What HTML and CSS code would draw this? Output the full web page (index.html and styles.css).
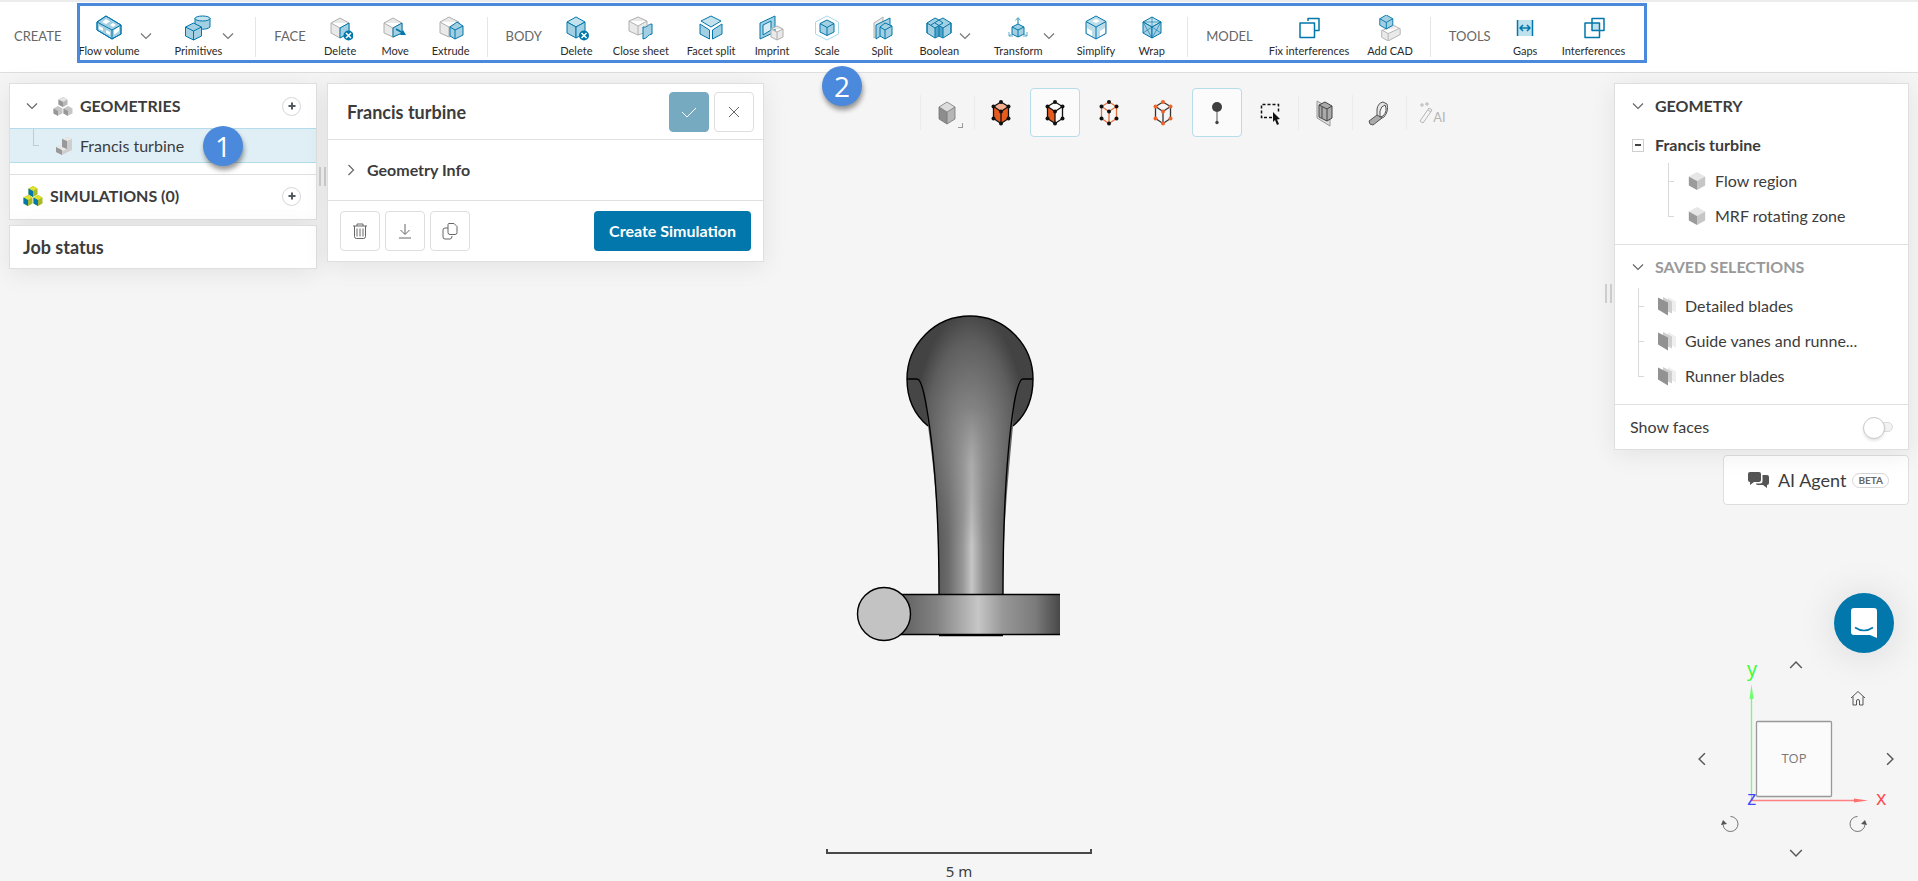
FILE: index.html
```html
<!DOCTYPE html>
<html lang="en">
<head>
<meta charset="utf-8">
<title>Francis turbine</title>
<link rel="stylesheet" href="styles.css">
</head>
<body>
<svg class="defs" aria-hidden="true">
  <symbol id="chev-down" viewBox="0 0 12 12"><path d="M1 3.500 6 8.500l5-5" fill="none" stroke="currentColor" stroke-width="1.200"/></symbol>
  <symbol id="plus" viewBox="0 0 12 12"><path d="M6 2.500v7M2.500 6h7" stroke="#50595f" stroke-width="2"/></symbol>
  <symbol id="solid" viewBox="0 0 20 22"><path d="m10 1 9 5-9 5-9-5z" fill="#e6e6e6"/><path d="m1 6 9 5v10l-9-5z" fill="#9b9b9b"/><path d="m19 6-9 5v10l9-5z" fill="#c6c6c6"/></symbol>
  <symbol id="faces" viewBox="0 0 20 20"><path d="m11 1 8 4.500v11l-8-4z" fill="#eee"/><path d="m6 1 9 4.500v12L6 13z" fill="#cfcfcf"/><path d="m1 1.500 10 5v13l-10-6z" fill="#929292"/></symbol>
  <symbol id="cad" viewBox="0 0 26 26"><path d="m13 2 9 5-9 5-9-5z" class="t1"/><path d="m4 7 9 5v11l-9-5z" class="t2"/><path d="m22 7-9 5v11l9-5z" class="t2"/></symbol>
  <symbol id="nodes" viewBox="0 0 22 28"><circle cx="11" cy="3" r="2"/><circle cx="3.500" cy="7.500" r="2"/><circle cx="18.500" cy="7.500" r="2"/><circle cx="11" cy="12.500" r="2"/><circle cx="3.500" cy="19.500" r="2"/><circle cx="18.500" cy="19.500" r="2"/><circle cx="11" cy="24.500" r="2"/></symbol>
  <symbol id="wire" viewBox="0 0 22 28"><path d="m11 3 7.500 4.500v12L11 24.500l-7.500-5v-12zM3.500 7.500l7.500 5 7.500-5M11 12.500v12" fill="none" stroke="currentColor" stroke-width="1.300"/></symbol>
</svg>

<header class="ribbon">
  <section class="group">
    <h2 class="group-name">CREATE</h2>
    <button class="tool has-menu"><svg viewBox="0 0 26 26"><path d="m1 7 9-6 15 9v9l-9 5-15-9z" class="t2"/><path d="m6 7 4-3 4 2.500-4 2.500zM14 10l3-2 3 2-3 2zM3 11l4 2v3l-4-2zM10 15l4 2v3l-4-2zM18 15l5-3v4l-5 4z" fill="#fff"/><path d="m1 7 9-6 15 9v9l-9 5-15-9zl15 8 9-5M16 15v9" class="ln"/></svg>Flow volume<span class="caret"><svg><use href="#chev-down"/></svg></span></button>
    <button class="tool has-menu"><svg viewBox="0 0 26 26"><path d="M10 3v9c3 3 12 3 15 0V3" class="t2"/><ellipse cx="17.500" cy="3.500" rx="7.500" ry="2.500" class="t1"/><path d="m8.500 8 8 4v9l-8 4-8-4v-9z" class="t2"/><path d="m.5 12 8 4 8-4M8.500 16v9" class="ln"/></svg>Primitives<span class="caret"><svg><use href="#chev-down"/></svg></span></button>
  </section>
  <section class="group">
    <h2 class="group-name">FACE</h2>
    <button class="tool"><svg viewBox="0 0 26 26"><path d="m13 3 9 5v10l-9 5-9-5V8zM4 8l9 5 9-5M13 13v10" class="gr"/><path d="m22 8-9 5v10l9-5z" class="t2"/><circle cx="21.500" cy="20.500" r="5" fill="#0277ab"/><path d="m19 18 5 5m0-5-5 5" stroke="#fff" stroke-width="1.500"/></svg>Delete</button>
    <button class="tool"><svg viewBox="0 0 26 26"><path d="m11 3 9 5v10l-9 4-9-4V8zM2 8l9 5 9-5M11 13v10" class="gr"/><path d="m20 8-9 5v9l9-4z" class="t2"/><path d="m14 14 7 4" stroke="#0277ab" stroke-width="1.500"/><path d="m18 20 6 0-3-5z" fill="#0277ab"/></svg>Move</button>
    <button class="tool"><svg viewBox="0 0 26 26"><path d="m11 2 10 5v10l-10 5-9-4V7zM2 7l9 5 10-5M11 12v10" class="gr"/><path d="m19 7 6 4v9l-8 4-5-3v-9z" class="t2"/><path d="m12 12 5 3 8-4M17 15v9" class="ln"/></svg>Extrude</button>
  </section>
  <section class="group">
    <h2 class="group-name">BODY</h2>
    <button class="tool"><svg viewBox="0 0 26 26"><use href="#cad"/><circle cx="21" cy="20.500" r="5" fill="#0277ab"/><path d="m18.500 18 5 5m0-5-5 5" stroke="#fff" stroke-width="1.500"/></svg>Delete</button>
    <button class="tool"><svg viewBox="0 0 26 26"><path d="m10 2 9 4v11l-9 3-9-4V6zM1 6l9 5 9-5M10 11v9" class="gr"/><path d="M15 12c4 1 5-3 9-3v10c-4 0-5 5-9 5z" class="t2"/></svg>Close sheet</button>
    <button class="tool"><svg viewBox="0 0 26 26"><path d="m13 1 10 5-10 6L3 6z" class="t1"/><path d="m2 9 9.500 6v9L2 19zM24 9l-9.500 6v9l9.500-5z" class="t2"/></svg>Facet split</button>
    <button class="tool"><svg viewBox="0 0 26 26"><path d="m1 8 15-7v16L1 24z" class="t2"/><path d="m4 10 8-4v9l-8 5z" fill="#d9ebf3" stroke="#0277ab"/><path d="m18 11 6 3v8l-6 3-6-3v-8zM12 14l6 3 6-3M18 17v8" class="gr"/></svg>Imprint</button>
    <button class="tool"><svg viewBox="0 0 26 26"><path d="m13 1 11.500 6v12L13 25 1.500 19V7z" fill="none" stroke="#a9d8ea"/><path d="m13 5 7 3.500V17l-7 3.500L6 17V8.500z" class="t2"/><path d="m6 8.500 7 4 7-4M13 12.500v8" class="ln"/></svg>Scale</button>
    <button class="tool"><svg viewBox="0 0 26 26"><path d="m5 8 9-6v14l-9 7z" class="gr"/><path d="m7 10 14-7v12L7 24z" class="t2"/><path d="m16 8 7 3v9l-7 4-5-3v-9z" class="t2"/><path d="m11 12 5 3 7-4M16 15v9" class="ln"/></svg>Split</button>
    <button class="tool has-menu"><svg viewBox="0 0 26 26"><path d="m1 8 8-5 4 2 4-2 8 5v10l-8 5-4-2-4 2-8-5z" class="t2"/><path d="M1 8l8 5 8-5-4-3-8 5M25 8l-8 5-8-5M9 13v10M17 13v10M13 11v10M1 8v10M25 8v10" class="ln"/><path d="M9 13l4-2 4 2v9l-4-1-4 1z" fill="#0277ab" opacity=".5"/></svg>Boolean<span class="caret"><svg><use href="#chev-down"/></svg></span></button>
    <button class="tool has-menu"><svg viewBox="0 0 26 26"><path d="m13 9 6 3v7l-6 3-6-3v-7z" class="t2"/><path d="m7 12 6 3 6-3M13 15v7M13 9V3" class="ln"/><path d="m10.500 5.500 2.500-3 2.500 3M7 19l-3 2M4 17v4h4M19 19l3 2M22 17v4h-4" fill="none" stroke="#5aaccd"/></svg>Transform<span class="caret"><svg><use href="#chev-down"/></svg></span></button>
    <button class="tool"><svg viewBox="0 0 26 26"><path d="m13 1 10 5.500v12L13 24 3 18.500v-12z" fill="#bcdcea"/><path d="m4 13 5 3v5l-5-3zM22 13l-5 3v5l5-3zM9 6l4-2 4 2-4 2z" fill="#fff"/><path d="m13 1 10 5.500v12L13 24 3 18.500v-12zM3 6.500l10 5.500 10-5.500M13 12v12" class="ln"/></svg>Simplify</button>
    <button class="tool"><svg viewBox="0 0 26 26"><use href="#cad"/><path d="m4 7 9 16M13 12l-9 6M22 7l-9 16M13 12l9 6M4 7h18M13 2v10" class="ln thin"/></svg>Wrap</button>
  </section>
  <section class="group">
    <h2 class="group-name">MODEL</h2>
    <button class="tool"><svg viewBox="0 0 26 26"><path d="M12 6V3.500h11v12h-4M4 8h14.500v14.500H4z" class="ln wide"/></svg>Fix interferences</button>
    <button class="tool"><svg viewBox="0 0 26 28"><path d="m17 11 7 4v6l-13 7-7-4v-7zM4 16l7 4 13-6M11 20v8" class="gr"/><path d="m9 0 7 4v7l-7 4-7-4V4z" class="t2"/><path d="m2 4 7 4 7-4M9 8v7" class="ln"/></svg>Add CAD</button>
  </section>
  <section class="group">
    <h2 class="group-name">TOOLS</h2>
    <button class="tool"><svg viewBox="0 0 26 26"><path d="M6 5h14v16H6z" fill="#bfe0ed"/><path d="M5.500 5v16M20.500 5v16M8 13h10M11 10l-3 3 3 3M15 10l3 3-3 3" class="ln wide"/></svg>Gaps</button>
    <button class="tool"><svg viewBox="0 0 26 26"><path d="M11 8h7.500v7H11z" fill="#bfe0ed"/><path d="M11 3.500h12v12H11zM4 8h14.500v14.500H4z" class="ln wide"/></svg>Interferences</button>
  </section>
  <div class="callout-frame"></div>
</header>

<main class="workspace">
  <div class="scene">
    <svg class="model" viewBox="0 0 206 328" role="img" aria-label="Francis turbine model">
      <defs>
        <linearGradient id="pipe"><stop offset="0" stop-color="#484848"/><stop offset=".25" stop-color="#6a6a6a"/><stop offset=".42" stop-color="#989898"/><stop offset=".52" stop-color="#c6c6c6"/><stop offset=".65" stop-color="#909090"/><stop offset="1" stop-color="#484848"/></linearGradient>
        <linearGradient id="ring"><stop offset="0" stop-color="#5b5b5b"/><stop offset=".25" stop-color="#838383"/><stop offset=".5" stop-color="#c6c6c6"/><stop offset=".65" stop-color="#989898"/><stop offset=".85" stop-color="#7b7b7b"/><stop offset="1" stop-color="#484848"/></linearGradient>
        <radialGradient id="dome" gradientUnits="userSpaceOnUse" cx="0" cy="0" r="1" gradientTransform="translate(114 150) scale(60 155)"><stop offset="0" stop-color="#9c9c9c"/><stop offset=".4" stop-color="#808080"/><stop offset=".8" stop-color="#5e5e5e"/><stop offset="1" stop-color="#434343"/></radialGradient>
        <linearGradient id="fade" gradientUnits="userSpaceOnUse" x1="0" y1="90" x2="0" y2="230"><stop offset="0" stop-color="#000"/><stop offset=".5" stop-color="#777"/><stop offset="1" stop-color="#fff"/></linearGradient>
        <mask id="blend"><path d="M0 0h206v328H0z" fill="url(#fade)"/></mask>
      </defs>
      <path d="M51 64a63 63 0 0 1 126 0c0 21-8 36-20 47-5 54-10 100-10 168H83c0-68-3-110-11-168C60 100 51 85 51 64z" fill="url(#dome)"/>
      <path d="M51 64h10c3 0 6 8 9 25l2 22C60 101 51 85 51 64zM177 64h-10c-3 0-6 8-9 25l-1 22c12-10 20-26 20-47z" fill="#464646"/>
      <path d="M70 89c8 45 13 110 13 190h64c0-80 4-145 11-190z" fill="url(#pipe)" mask="url(#blend)"/>
      <path d="M72 111C60 101 51 85 51 64a63 63 0 0 1 126 0c0 21-8 37-20 47M51 64h10c3 0 6 8 9 25 8 45 13 110 13 190M177 64h-10c-3 0-6 8-9 25-7 45-11 110-11 190" fill="none" stroke="#000" stroke-width="1.400"/>
      <path d="M40 279h164v41H40z" fill="url(#ring)"/>
      <path d="M40 279.500h164M40 319.500h164M83 320.500h64" stroke="#000" stroke-width="1.300"/>
      <circle cx="28" cy="299" r="26.500" fill="#c3c3c3" stroke="#000" stroke-width="1.400"/>
    </svg>
  </div>

  <aside class="left">
    <nav class="card">
      <div class="branch-head indent"><svg class="chev"><use href="#chev-down"/></svg>
        <svg class="ico20" viewBox="0 0 20 20"><path d="m10 1 4.500 2.500v5L10 11 5.500 8.500v-5z" fill="#b8b8b8"/><path d="m10 1 4.500 2.500L10 6 5.500 3.500z" fill="#e3e3e3"/><path d="m5.500 3.500 4.500 2.500v5l-4.500-2.500z" fill="#979797"/><path d="m5 10 4.500 2.500v5L5 19.500.5 17.500v-5z" fill="#c6c6c6"/><path d="M.5 12.500 5 15v5l-4.500-2.500z" fill="#979797"/><path d="m15 10 4.500 2.500v5L15 19.500l-4.500-2v-5z" fill="#c6c6c6"/><path d="M10.500 12.500 15 15v5l-4.500-2.500z" fill="#979797"/></svg>
        <h3>GEOMETRIES</h3><button class="add" aria-label="Add geometry"><svg><use href="#plus"/></svg></button></div>
      <a class="leaf selected" href="#"><span class="elbow"></span><svg class="ico20" viewBox="0 0 20 20"><path d="m8 3 6-2 4 2v11l-10 5-6-3v-5l6-1z" fill="#cecece"/><path d="m8 3 6-2 4 2-5 2zM2 11l4-2 7 4-5 2z" fill="#e8e8e8"/><path d="m8 3 5 2v8l-5-2zM2 11l6 3v5l-6-3z" fill="#999"/></svg>Francis turbine</a>
      <div class="branch-head sims"><svg class="ico20" viewBox="0 0 20 20"><path d="m10 0 4.500 2.500v6L10 11 5.500 8.500v-6z" fill="#a5b92a"/><path d="m10 0 4.500 2.500L10 5 5.500 2.500z" fill="#dce22f"/><path d="m5.500 2.500 4.500 2.500v6L5.500 8.500z" fill="#0277ab"/><path d="m5 9 4.500 2.500v6L5 20 .5 17.500v-6z" fill="#a5b92a"/><path d="m5 9 4.500 2.500L5 14 .5 11.500z" fill="#dce22f"/><path d="m.5 11.500 4.500 2.500v6L.5 17.500z" fill="#0277ab"/><path d="m15 9 4.500 2.500v6L15 20l-4.500-2.500v-6z" fill="#a5b92a"/><path d="m15 9 4.500 2.500L15 14l-4.500-2.500z" fill="#dce22f"/><path d="m10.500 11.500 4.500 2.500v6l-4.500-2.500z" fill="#0277ab"/></svg>
        <h3>SIMULATIONS (0)</h3><button class="add" aria-label="Add simulation"><svg><use href="#plus"/></svg></button></div>
      <span class="badge badge-one">1</span>
    </nav>
    <section class="card job"><h3>Job status</h3></section>
  </aside>
  <span class="grip near"></span>
  <section class="card details">
    <header class="details-head"><h2>Francis turbine</h2>
      <button class="square done" aria-label="Apply"><svg viewBox="0 0 16 16"><path d="m1 8 5 5 9-9" stroke="#fff"/></svg></button>
      <button class="square" aria-label="Close"><svg viewBox="0 0 16 16"><path d="m3 3 10 10M13 3 3 13"/></svg></button></header>
    <button class="info"><svg class="chev side"><use href="#chev-down"/></svg>Geometry Info</button>
    <footer class="details-foot">
      <button class="square" aria-label="Delete"><svg viewBox="0 0 16 16"><path d="M1 3h14M5 3V1h6v2M2.500 3v10.500a2 2 0 0 0 2 2h7a2 2 0 0 0 2-2V3M5 5.500v8M8 5.500v8M11 5.500v8"/></svg></button>
      <button class="square" aria-label="Download"><svg viewBox="0 0 16 16"><path d="M8 1v10M3.500 7 8 11.500 12.500 7M2 15h12"/></svg></button>
      <button class="square" aria-label="Duplicate"><svg viewBox="0 0 16 16"><path d="M7 .5h5l3 3v6a2 2 0 0 1-2 2H8a2 2 0 0 1-2-2v-8a1 1 0 0 1 1-1zM6 5H3a2 2 0 0 0-2 2v7a2 2 0 0 0 2 2h5q2 0 2-3"/></svg></button>
      <button class="primary">Create Simulation</button>
    </footer>
  </section>

  <div class="viewbar">
    <button class="view sep" aria-label="Render mode"><svg viewBox="0 0 22 28"><path d="m11 3 8 5-8 5-8-5z" fill="#dcdcdc"/><path d="M3 8l8 5v12l-8-5z" fill="#8d8d8d"/><path d="M19 8l-8 5v12l8-5z" fill="#b5b5b5"/><path d="m11 3 8 5v12l-8 5-8-5V8zM3 8l8 5 8-5M11 13v12" fill="none" stroke="#777" stroke-width=".8"/></svg><span class="corner"></span></button>
    <button class="view sep" aria-label="Select volumes"><svg viewBox="0 0 22 28"><path d="m11 3 7.500 4.500v12L11 24.500l-7.500-5v-12z" fill="#e65a1e"/><path d="m11 3 7.500 4.500-7.500 5-7.500-5z" fill="#f6ae8e"/><use href="#wire" color="#111"/><use href="#nodes" fill="#111"/></svg></button>
    <button class="view on" aria-label="Select faces"><svg viewBox="0 0 22 28"><path d="m3.500 7.500 7.500 5v12l-7.500-5z" fill="#e65a1e"/><use href="#wire" color="#111"/><use href="#nodes" fill="#111"/></svg></button>
    <button class="view" aria-label="Select edges"><svg viewBox="0 0 22 28"><use href="#wire" color="#e8713d"/><use href="#nodes" fill="#111"/></svg></button>
    <button class="view" aria-label="Select vertices"><svg viewBox="0 0 22 28"><use href="#wire" color="#333"/><use href="#nodes" fill="#f0642b"/></svg></button>
    <button class="view on" aria-label="Probe point"><svg viewBox="0 0 22 28"><circle cx="11" cy="8" r="5" fill="#3f3f3f"/><path d="M11 13v10" stroke="#555"/><circle cx="11" cy="23.500" r="1.700" fill="#444"/></svg></button>
    <button class="view" aria-label="Box select"><svg viewBox="0 0 22 28"><path d="M2.500 18.500h-1v-13h17v9" fill="none" stroke="#111" stroke-width="1.500" stroke-dasharray="3 2"/><path d="M4 18.500h8" stroke="#111" stroke-width="1.500" stroke-dasharray="3 2"/><path d="m13 13 7 7-3 .5 2 4.500-2 1-2-5-2 2z" fill="#111"/></svg></button>
    <button class="view sep" aria-label="Section plane"><svg viewBox="0 0 22 28"><path d="m3 2 13 7v18L3 19z" fill="#ddd" stroke="#999"/><path d="m5 6 6-3 7 4v12l-5 3-8-4z" fill="#aaa" stroke="#444"/><path d="m5 6 8 4v12M13 10l5-3M8 8v11" fill="none" stroke="#444"/></svg></button>
    <button class="view sep" aria-label="Measure"><svg viewBox="0 0 22 28"><path d="M9 17V10q1-6 6-7l4 2q2 7-3 13l-4 2z" fill="#e4e4e4" stroke="#555"/><path d="M12 18v-6q1-5 5-6 3 6-2 11z" fill="#f6f6f6" stroke="#555"/><path d="m9 16-8 6 1 3 3 1 9-7z" fill="#aaa" stroke="#555"/></svg></button>
    <button class="view sep ai" aria-label="AI assistant"><svg viewBox="0 0 14 22"><path d="m1 19 9-13 3 2-9 13zM9 8l3 2M3 1v4M1 3h4M8 0v4M6 2h4" fill="none" stroke="#b5b5b5"/></svg><span>AI</span></button>
    <span class="badge badge-two">2</span>
  </div>

  <span class="grip far"></span>
  <aside class="right">
    <section class="card">
      <div class="tree">
        <div class="row head"><svg class="chev"><use href="#chev-down"/></svg><h3>GEOMETRY</h3></div>
        <div class="row root"><button class="fold" aria-label="Collapse"></button><h3>Francis turbine</h3></div>
        <ul class="twigs deep">
          <li><svg class="cube"><use href="#solid"/></svg>Flow region</li>
          <li><svg class="cube"><use href="#solid"/></svg>MRF rotating zone</li>
        </ul>
      </div>
      <div class="tree saved">
        <div class="row head"><svg class="chev"><use href="#chev-down"/></svg><h3 class="muted">SAVED SELECTIONS</h3></div>
        <ul class="twigs">
          <li><svg class="cube"><use href="#faces"/></svg>Detailed blades</li>
          <li><svg class="cube"><use href="#faces"/></svg>Guide vanes and runne...</li>
          <li><svg class="cube"><use href="#faces"/></svg>Runner blades</li>
        </ul>
      </div>
      <label class="switch-row">Show faces<input type="checkbox" class="switch"></label>
    </section>
    <button class="agent"><svg viewBox="0 0 21 16"><path d="M2 0h9q2 0 2 2v6q0 2-2 2H6l-4 3v-3q-2 0-2-2V2q0-2 2-2z"/><path d="M14.500 3H19q2 0 2 2v6q0 2-2 2v3l-4-3h-5q-2 0-2-1.500h4q2.500 0 2.500-2.500z"/></svg>AI Agent<span class="beta">BETA</span></button>
  </aside>

  <button class="chat" aria-label="Open chat"><svg viewBox="0 0 26 30"><path d="M3 0h20q3 0 3 3v27l-7-3H3q-3 0-3-3V3q0-3 3-3z" fill="#fff"/><path d="M4 19.500q9 6 18 0" fill="none" stroke="#0277ab" stroke-width="1.600"/></svg></button>

  <div class="gizmo">
    <svg class="axes" viewBox="0 0 150 150"><path d="M17.500 137V35" stroke="#6dff6d" stroke-width="1.300"/><path d="m17.500 20 2 15h-4z" fill="#6dff6d"/><path d="M18 136.500h102" stroke="#ff8080" stroke-width="1.500"/><path d="m134 136.500-14 2v-4z" fill="#ff7272"/><rect x="22.500" y="57.500" width="75" height="75" rx="1" fill="#fbfbfb" stroke="#999" stroke-width="1.300"/></svg>
    <span class="axis y">y</span><span class="axis x">x</span><span class="axis z">z</span>
    <span class="face">TOP</span>
    <button class="spin up" aria-label="Rotate up"><svg><use href="#chev-down"/></svg></button>
    <button class="spin down" aria-label="Rotate down"><svg><use href="#chev-down"/></svg></button>
    <button class="spin west" aria-label="Rotate left"><svg><use href="#chev-down"/></svg></button>
    <button class="spin east" aria-label="Rotate right"><svg><use href="#chev-down"/></svg></button>
    <button class="spin home" aria-label="Home"><svg viewBox="0 0 16 16"><path d="m1 8 7-6.500L15 8M3 6.500V15h3.500v-4a1.500 1.500 0 0 1 3 0v4H13V6.500" fill="none" stroke="#555"/></svg></button>
    <button class="spin ccw" aria-label="Roll left"><svg viewBox="0 0 20 18"><path d="M10.500 1.500a7.500 7.500 0 1 1-7.500 8" fill="none" stroke="#777"/><path d="m1 10 2-5 4 4z" fill="#555"/></svg></button>
    <button class="spin cw" aria-label="Roll right"><svg viewBox="0 0 20 18"><path d="M9.500 1.500a7.500 7.500 0 1 0 7.500 8" fill="none" stroke="#777"/><path d="m19 10-2-5-4 4z" fill="#555"/></svg></button>
  </div>

  <div class="ruler"><span class="ruler-bar"></span>5 m</div>
</main>
</body>
</html>
```

FILE: styles.css
```css
* { box-sizing: border-box; }
body {
  margin: 0;
  min-height: 100vh;
  display: flex;
  flex-direction: column;
  overflow: hidden;
  background: #f5f5f5;
  color: #3c3c3c;
  font: 16px/20px Lato, "Open Sans", sans-serif;
}
h2, h3, ul { margin: 0; padding: 0; }
h3 { font-size: 16px; line-height: 20px; font-weight: 700; }
button { font: inherit; color: inherit; background: none; border: 0; padding: 0; cursor: pointer; }
svg { display: block; flex: none; }
.defs { position: absolute; width: 0; height: 0; }

.t1 { fill: #c4e2ee; stroke: #0277ab; stroke-linejoin: round; }
.t2 { fill: #a3cfe2; stroke: #0277ab; stroke-linejoin: round; }
.ln { fill: none; stroke: #0277ab; stroke-linejoin: round; }
.ln.wide { stroke-width: 1.5; }
.ln.thin { stroke-width: .6; }
.gr { fill: #e9e9e9; stroke: #b0b0b0; stroke-linejoin: round; }

/* ribbon */
.ribbon {
  position: relative;
  display: flex;
  height: 73px;
  padding: 0 14px;
  background: #fff;
  border-top: 2px solid #ececec;
  border-bottom: 1px solid #dedede;
}
.group { display: flex; align-items: center; }
.group + .group::before {
  content: "";
  width: 1px;
  height: 40px;
  margin: 0 18px 0 8px;
  background: #e6e6e6;
}
.group-name { margin-right: 7px; padding-bottom: 3px; font-size: 13px; font-weight: 400; color: #666; }
.tool {
  position: relative;
  display: flex;
  flex-direction: column;
  align-items: center;
  min-width: 55px;
  padding: 0 9px;
  gap: 2px;
  font-size: 11px;
  line-height: 16px;
  color: #2a2a2a;
  white-space: nowrap;
}
.tool > svg { width: 26px; height: 26px; }
.tool.has-menu { min-width: 0; padding: 0 0 0 10px; margin-right: 25px; }
.caret { position: absolute; left: 100%; top: 15px; color: #777; }
.caret svg { width: 12px; height: 12px; }
.callout-frame {
  position: absolute;
  left: 77px;
  top: 1px;
  width: 1570px;
  height: 60px;
  border: 3px solid #4a89dc;
  pointer-events: none;
}

/* workspace */
.workspace {
  position: relative;
  flex: 1;
  display: flex;
  align-items: flex-start;
  padding: 10px 9px 0 9px;
}
.workspace > * { flex: none; }
.scene {
  position: absolute;
  inset: 0;
  display: flex;
  align-items: center;
  justify-content: center;
  padding-top: 4px;
}
.model { width: 206px; height: 328px; }
.card {
  position: relative;
  background: #fff;
  border: 1px solid #dfdfdf;
  box-shadow: 0 4px 24px rgba(0, 0, 0, .08);
}
.left { position: relative; width: 308px; display: grid; gap: 5px; }
.branch-head { display: flex; align-items: center; height: 44px; padding: 0 15px 0 13px; }
.branch-head.indent { padding-left: 16px; }
.branch-head .ico20 { margin-right: 7px; }
.branch-head.indent .ico20 { margin-left: 15px; margin-right: 7px; }
.ico20 { width: 20px; height: 20px; }
.chev { width: 12px; height: 12px; color: #666; }
.chev.side { transform: rotate(-90deg); }
.add {
  display: grid;
  place-items: center;
  width: 19px;
  height: 19px;
  margin-left: auto;
  border: 1px solid #d6d6da;
  border-radius: 50%;
}
.add svg { width: 12px; height: 12px; }
.leaf {
  display: flex;
  align-items: center;
  height: 35px;
  padding-left: 23px;
  color: inherit;
  text-decoration: none;
}
.leaf.selected { background: #e0eff6; border: solid #b4dcea; border-width: 1px 0; }
.elbow { width: 6px; height: 17px; margin: 0 15px 16px 0; border: solid #bfcdd3; border-width: 0 0 1px 1px; }
.leaf .ico20 { margin-right: 6px; }
.branch-head.sims { height: 45px; margin-top: 11px; padding-bottom: 2px; border-top: 1px solid #dfdfdf; }
.job { padding: 11px 13px; }
.job h3 { font-size: 18px; }
.grip { width: 7px; height: 19px; border: solid #d2d2d2; border-width: 0 2px; }
.grip.near { margin: 84px 1px 0 2px; }
.grip.far { margin: 201px 2px 0; }
.badge {
  position: absolute;
  display: grid;
  place-items: center;
  width: 40px;
  height: 40px;
  border-radius: 50%;
  background: #4a89dc;
  color: #fff;
  font: 28px/40px "Open Sans", sans-serif;
  box-shadow: 1px 4px 5px rgba(0, 0, 0, .4);
}
.badge-one { left: 193px; top: 42px; }

.details { width: 437px; }
.details-head { display: flex; align-items: center; gap: 5px; height: 55px; padding: 0 9px 0 19px; }
.details-head h2 { flex: 1; font-size: 18px; font-weight: 700; }
.square {
  display: grid;
  place-items: center;
  width: 40px;
  height: 40px;
  border: 1px solid #dedede;
  border-radius: 4px;
  background: #fff;
}
.square svg { width: 16px; height: 16px; fill: none; stroke: #666; overflow: visible; }
.square.done { background: #76aac1; border-color: #76aac1; }
.info {
  display: flex;
  align-items: center;
  gap: 10px;
  width: 100%;
  height: 62px;
  padding: 0 17px;
  border: solid #dfdfdf;
  border-width: 1px 0;
  font-weight: 700;
}
.details-foot { display: flex; gap: 5px; padding: 10px 12px; }
.primary {
  height: 40px;
  margin-left: auto;
  padding: 0 15px;
  border-radius: 4px;
  background: #0277ab;
  color: #fff;
  font-weight: 700;
}

.workspace > .viewbar { flex: 1; position: relative; display: flex; justify-content: center; padding: 5px 0 0 12px; }
.view {
  position: relative;
  display: flex;
  align-items: center;
  justify-content: center;
  width: 50px;
  height: 49px;
  margin: 0 2px;
  border: 1px solid transparent;
  border-radius: 4px;
}
.view svg { width: 22px; height: 28px; }
.view.on { background: #fbfbfb; border-color: #b7dcea; }
.view.sep::before { content: ""; position: absolute; left: -3px; top: 6px; bottom: 6px; width: 1px; background: #ececec; }
.corner { position: absolute; right: 8px; bottom: 8px; width: 5px; height: 5px; border: solid #999; border-width: 0 1px 1px 0; }
.view.ai { color: #b5b5b5; font-size: 13px; }
.view.ai svg { width: 14px; height: 22px; }
.view.ai span { padding-top: 8px; }
.badge-two { left: 58px; top: -17px; }

.right { position: relative; width: 295px; display: grid; gap: 5px; justify-items: end; }
.right .card { width: 100%; }
.tree { padding: 0 10px 11px 17px; }
.saved { border-top: 1px solid #dfdfdf; }
.row { display: flex; align-items: center; gap: 11px; height: 43px; }
.row.root { height: 36px; }
.fold { width: 12px; height: 13px; border: 1px solid #cfcfcf; display: grid; place-items: center; }
.fold::before { content: ""; width: 6px; height: 2px; background: #444; }
.muted { color: #999; }
.twigs { list-style: none; margin-left: 6px; }
.twigs.deep { margin-left: 36px; }
.twigs li { position: relative; display: flex; align-items: center; gap: 8px; height: 35px; padding-left: 19px; white-space: nowrap; }
.twigs li::before { content: ""; position: absolute; left: 0; top: 0; width: 5px; height: 18px; border: solid #d9d9d9; border-width: 0 0 1px 1px; }
.twigs li:not(:last-child)::after { content: ""; position: absolute; left: 0; top: 0; bottom: 0; width: 1px; background: #d9d9d9; }
.cube { width: 20px; height: 20px; }
.switch-row { display: flex; align-items: center; justify-content: space-between; height: 45px; padding: 0 15px; border-top: 1px solid #dfdfdf; }
.switch {
  appearance: none;
  position: relative;
  width: 20px;
  height: 10px;
  margin: 0;
  border: 1px solid #dcdcdc;
  border-radius: 5px;
  background: #f2f2f2;
}
.switch::before {
  content: "";
  position: absolute;
  left: -11px;
  top: -6px;
  width: 20px;
  height: 20px;
  border: 1px solid #c9c9c9;
  border-radius: 50%;
  background: #fff;
  box-shadow: 0 2px 3px rgba(0, 0, 0, .1);
}
.agent {
  display: flex;
  align-items: center;
  height: 50px;
  padding: 0 19px 0 24px;
  border: 1px solid #dedede;
  border-radius: 4px;
  background: #fff;
  font-size: 18px;
}
.agent svg { width: 21px; height: 16px; margin-right: 9px; fill: #555; }
.beta { margin-left: 6px; padding: 0 5px; border: 1px solid #d6d6d6; border-radius: 8px; font-size: 10px; line-height: 13px; font-weight: 700; color: #666; }

.chat {
  position: absolute;
  right: 24px;
  bottom: 228px;
  display: grid;
  place-items: center;
  width: 60px;
  height: 60px;
  border-radius: 50%;
  background: #0277ab;
  box-shadow: 0 2px 40px rgba(0, 0, 0, .12);
}
.chat svg { width: 26px; height: 30px; }

/* view cube */
.gizmo { position: absolute; right: 18px; bottom: 11px; width: 206px; height: 206px; color: #555; }
.axes { position: absolute; left: 40px; top: 0; width: 150px; height: 150px; }
.face { position: absolute; left: 63px; top: 57px; width: 74px; text-align: center; font: 13px/74px "Open Sans", sans-serif; color: #777; }
.axis { position: absolute; font: 20px/20px "Open Sans", sans-serif; }
.axis.y { left: 53px; top: -5px; color: #3f3; }
.axis.x { left: 182px; top: 124px; color: #ff4a4a; }
.axis.z { left: 53px; top: 124px; color: #44f; }
.spin { position: absolute; width: 20px; height: 18px; display: grid; place-items: center; }
.spin svg { width: 14px; height: 14px; }
.up { left: 92px; top: -8px; transform: rotate(180deg); }
.down { left: 92px; top: 180px; }
.west { left: -2px; top: 86px; transform: rotate(90deg); }
.east { left: 186px; top: 86px; transform: rotate(-90deg); }
.home { left: 154px; top: 25px; }
.home svg { width: 16px; height: 16px; }
.ccw { left: 26px; top: 151px; }
.cw { left: 154px; top: 151px; }
.ccw svg, .cw svg { width: 20px; height: 18px; }

.ruler {
  position: absolute;
  left: 0;
  right: 0;
  bottom: 0;
  display: flex;
  flex-direction: column;
  align-items: center;
  gap: 7px;
  font: 15px/20px "Noto Sans", sans-serif;
  pointer-events: none;
}
.ruler-bar { width: 266px; height: 5px; border: 2px solid #484848; border-top: 0; }
```
